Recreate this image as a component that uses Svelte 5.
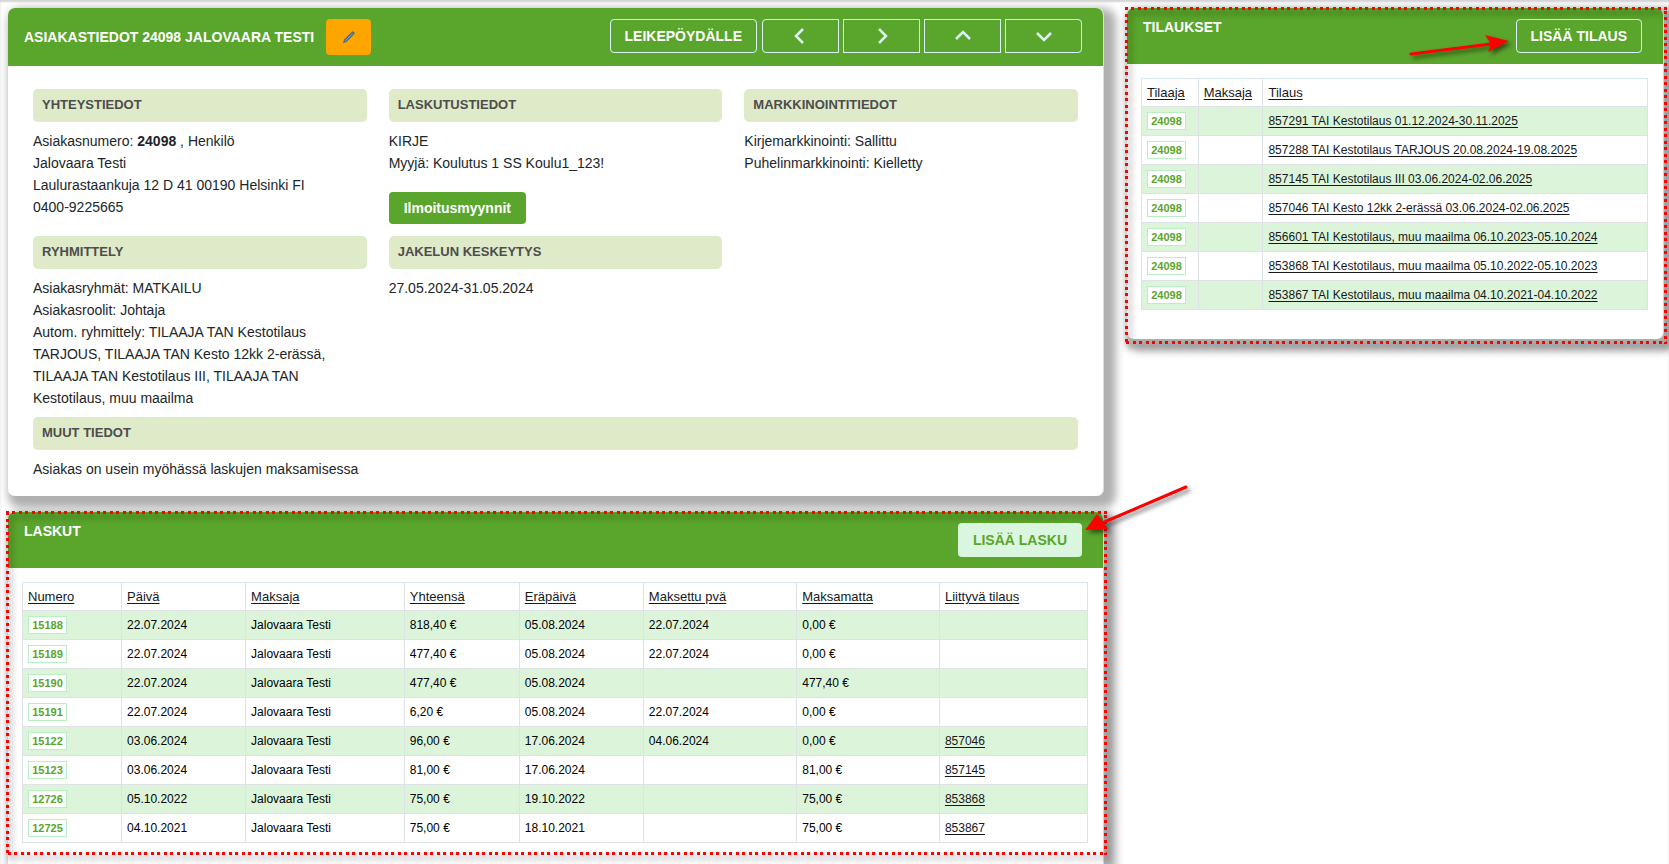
<script>
  const customerId = "24098";

  // w = column width, percent of the table
  const orderColumns = [
    { label: "Tilaaja", w: 11.2 },
    { label: "Maksaja", w: 12.8 },
    { label: "Tilaus", w: 76 }
  ];

  const orders = [
    "857291 TAI Kestotilaus 01.12.2024-30.11.2025",
    "857288 TAI Kestotilaus TARJOUS 20.08.2024-19.08.2025",
    "857145 TAI Kestotilaus III 03.06.2024-02.06.2025",
    "857046 TAI Kesto 12kk 2-erässä 03.06.2024-02.06.2025",
    "856601 TAI Kestotilaus, muu maailma 06.10.2023-05.10.2024",
    "853868 TAI Kestotilaus, muu maailma 05.10.2022-05.10.2023",
    "853867 TAI Kestotilaus, muu maailma 04.10.2021-04.10.2022"
  ];

  const invoiceColumns = [
    { label: "Numero", w: 9.3 },
    { label: "Päivä", w: 11.65 },
    { label: "Maksaja", w: 14.9 },
    { label: "Yhteensä", w: 10.8 },
    { label: "Eräpäivä", w: 11.65 },
    { label: "Maksettu pvä", w: 14.4 },
    { label: "Maksamatta", w: 13.4 },
    { label: "Liittyvä tilaus", w: 13.9 }
  ];

  const payer = "Jalovaara Testi";
  const invoices = [
    { id: "15188", date: "22.07.2024", total: "818,40", due: "05.08.2024", paid: "22.07.2024", open: "0,00", order: "" },
    { id: "15189", date: "22.07.2024", total: "477,40", due: "05.08.2024", paid: "22.07.2024", open: "0,00", order: "" },
    { id: "15190", date: "22.07.2024", total: "477,40", due: "05.08.2024", paid: "", open: "477,40", order: "" },
    { id: "15191", date: "22.07.2024", total: "6,20", due: "05.08.2024", paid: "22.07.2024", open: "0,00", order: "" },
    { id: "15122", date: "03.06.2024", total: "96,00", due: "17.06.2024", paid: "04.06.2024", open: "0,00", order: "857046" },
    { id: "15123", date: "03.06.2024", total: "81,00", due: "17.06.2024", paid: "", open: "81,00", order: "857145" },
    { id: "12726", date: "05.10.2022", total: "75,00", due: "19.10.2022", paid: "", open: "75,00", order: "853868" },
    { id: "12725", date: "04.10.2021", total: "75,00", due: "18.10.2021", paid: "", open: "75,00", order: "853867" }
  ];

  const arrows = [
    { label: "Edellinen", d: "M11 2 L4 9 L11 16" },
    { label: "Seuraava", d: "M6 2 L13 9 L6 16" },
    { label: "Ylös", d: "M2 12 L9 5 L16 12" },
    { label: "Alas", d: "M2 6 L9 13 L16 6" }
  ];
</script>

<div class="page">
  <main class="column">
    <section class="card">
      <header class="bar">
        <h2 class="middle">ASIAKASTIEDOT {customerId} JALOVAARA TESTI</h2>
        <button class="edit" aria-label="Muokkaa">
          <svg width="14" height="14" viewBox="0 0 14 14">
            <path d="M1 13 L2 9.500 L9.800 1.700 Q10.700 .8 11.600 1.700 L12.300 2.400 Q13.200 3.300 12.300 4.200 L4.500 12 Z" fill="#3f729b" />
            <path d="M3.200 10.800 L9.600 4.400" stroke="#c99c3c" stroke-width="1" />
            <path d="M9 2.500 L11.500 5" stroke="#d99a20" stroke-width=".7" />
          </svg>
        </button>
        <div class="actions">
          <button class="outline">LEIKEPÖYDÄLLE</button>
          <div class="nav">
            {#each arrows as arrow}
              <button class="outline" aria-label={arrow.label}>
                <svg width="18" height="18" viewBox="0 0 18 18">
                  <path d={arrow.d} fill="none" stroke="#dcf3f5" stroke-width="2.500" />
                </svg>
              </button>
            {/each}
          </div>
        </div>
      </header>

      <div class="info">
        <div>
          <h3>YHTEYSTIEDOT</h3>
          <p>Asiakasnumero: <b>{customerId}</b> , Henkilö</p>
          <p>Jalovaara Testi</p>
          <p>Laulurastaankuja 12 D 41 00190 Helsinki FI</p>
          <p>0400-9225665</p>
        </div>
        <div>
          <h3>LASKUTUSTIEDOT</h3>
          <p>KIRJE</p>
          <p>Myyjä: Koulutus 1 SS Koulu1_123!</p>
          <button class="solid">Ilmoitusmyynnit</button>
        </div>
        <div>
          <h3>MARKKINOINTITIEDOT</h3>
          <p>Kirjemarkkinointi: Sallittu</p>
          <p>Puhelinmarkkinointi: Kielletty</p>
        </div>
        <div>
          <h3>RYHMITTELY</h3>
          <p>Asiakasryhmät: MATKAILU</p>
          <p>Asiakasroolit: Johtaja</p>
          <p>
            Autom. ryhmittely: TILAAJA TAN Kestotilaus TARJOUS, TILAAJA TAN Kesto 12kk 2-erässä,
            TILAAJA TAN Kestotilaus III, TILAAJA TAN Kestotilaus, muu maailma
          </p>
        </div>
        <div>
          <h3>JAKELUN KESKEYTYS</h3>
          <p>27.05.2024-31.05.2024</p>
        </div>
        <div class="wide">
          <h3>MUUT TIEDOT</h3>
          <p>Asiakas on usein myöhässä laskujen maksamisessa</p>
        </div>
      </div>
    </section>

    <section class="card invoices">
      <div class="marked">
        <header class="bar">
          <h2>LASKUT</h2>
          <div class="actions">
            <button class="light">LISÄÄ LASKU</button>
            <svg class="pointer from-right" width="112" height="56" viewBox="0 0 112 56">
              <path d="M104 6 L20 42" stroke="red" stroke-width="3" stroke-linecap="round" />
              <path d="M3 49 L15 33 L21 41 L26 48 Z" fill="red" />
            </svg>
          </div>
        </header>
        <div class="table-wrap">
          <table>
            <thead>
              <tr>
                {#each invoiceColumns as col}
                  <th style="width: {col.w}%"><a href="#sort">{col.label}</a></th>
                {/each}
              </tr>
            </thead>
            <tbody>
              {#each invoices as row}
                <tr>
                  <td><a class="badge" href="#invoice">{row.id}</a></td>
                  <td>{row.date}</td>
                  <td>{payer}</td>
                  <td>{row.total} €</td>
                  <td>{row.due}</td>
                  <td>{row.paid}</td>
                  <td>{row.open} €</td>
                  <td>{#if row.order}<a href="#order">{row.order}</a>{/if}</td>
                </tr>
              {/each}
            </tbody>
          </table>
        </div>
        <svg class="frame"><rect width="100%" height="100%" /></svg>
      </div>
    </section>
  </main>

  <aside class="column">
    <section class="card">
      <div class="marked">
        <header class="bar">
          <h2>TILAUKSET</h2>
          <div class="actions">
            <button class="outline">LISÄÄ TILAUS</button>
            <svg class="pointer from-left" width="106" height="34" viewBox="0 0 106 34">
              <path d="M1 22 L81 12" stroke="red" stroke-width="3" stroke-linecap="round" />
              <path d="M99 9 L75 3 L81 12 L78 20 Z" fill="red" />
            </svg>
          </div>
        </header>
        <div class="table-wrap orders">
          <table>
            <thead>
              <tr>
                {#each orderColumns as col}
                  <th style="width: {col.w}%"><a href="#sort">{col.label}</a></th>
                {/each}
              </tr>
            </thead>
            <tbody>
              {#each orders as order}
                <tr>
                  <td><a class="badge" href="#customer">{customerId}</a></td>
                  <td></td>
                  <td><a href="#order">{order}</a></td>
                </tr>
              {/each}
            </tbody>
          </table>
        </div>
        <svg class="frame"><rect width="100%" height="100%" /></svg>
      </div>
    </section>
  </aside>
</div>

<style>
  :global(body) {
    overflow: hidden;
    background: #fff;
  }

  .page {
    display: grid;
    grid-template-columns: 1096fr 537fr;
    gap: 23px;
    align-items: start;
    box-sizing: border-box;
    min-height: 100vh;
    padding: 8px 5px 0 8px;
    box-shadow: inset 0 2px 2px #d4d4d4;
    font-family: "Liberation Sans", Arial, sans-serif;
    font-size: 14px;
    line-height: 22px;
    color: #212529;
  }

  .column {
    display: flex;
    flex-direction: column;
    gap: 16px;
    min-width: 0;
  }

  .card {
    position: relative;
    background: #fff;
    border-right: 1px solid #dcdcdc;
    border-radius: 7px;
    box-shadow: 6px 6px 8px 6px #b0b0b0;
  }

  .invoices {
    padding-bottom: 40px;
  }

  .bar {
    display: flex;
    align-items: flex-start;
    padding: 11px 21px 11px 16px;
    background: #5aa52b;
    border-radius: 7px 7px 0 0;
  }

  h2 {
    margin: 0;
    font-size: 14px;
    line-height: 16px;
    color: #fff;
  }

  h2.middle {
    align-self: center;
  }

  .actions {
    position: relative;
    display: flex;
    gap: 5px;
    margin-left: auto;
  }

  .nav {
    display: flex;
    gap: 4px;
  }

  button {
    display: flex;
    align-items: center;
    justify-content: center;
    box-sizing: border-box;
    height: 34px;
    padding: 0 14px;
    border: 1px solid transparent;
    border-radius: 4px;
    font-family: inherit;
    font-size: 14px;
    font-weight: bold;
    color: #fff;
    cursor: pointer;
  }

  .edit {
    width: 45px;
    height: 36px;
    margin-left: 12px;
    padding: 0;
    background: #ffa500;
  }

  .outline {
    background: none;
    border-color: #dcf3f5;
  }

  .nav button {
    width: 77px;
    border-radius: 0;
  }

  .nav button:first-child {
    border-radius: 4px 0 0 4px;
  }

  .nav button:last-child {
    border-radius: 0 4px 4px 0;
  }

  .light {
    background: #dbf6de;
    color: #5aa52b;
  }

  .solid {
    height: 32px;
    margin: 18px 0 4px;
    background: #5aa52b;
  }

  .info {
    display: grid;
    grid-template-columns: repeat(3, 1fr);
    gap: 8px 22px;
    padding: 23px 25px 16px;
  }

  .wide {
    grid-column: 1 / -1;
  }

  h3 {
    height: 33px;
    margin: 0 0 8px;
    padding: 0 9px;
    background: #dfeac8;
    border-radius: 5px;
    font-size: 13px;
    line-height: 31px;
    color: #4d4d4d;
  }

  p {
    margin: 0;
  }

  .table-wrap {
    padding: 14px 15px 7px 14px;
  }

  .orders {
    padding-bottom: 29px;
  }

  table {
    width: 100%;
    table-layout: fixed;
    border-collapse: collapse;
    font-size: 12px;
    line-height: 18px;
    color: #000;
  }

  th,
  td {
    box-sizing: border-box;
    height: 29px;
    padding: 0 5px;
    border: 1px solid #dee2e6;
    border-top-color: #d6e8f2;
    text-align: left;
    vertical-align: middle;
    white-space: nowrap;
  }

  th {
    height: 28px;
    font-size: 13px;
    font-weight: normal;
  }

  tbody tr:nth-child(odd) {
    background: #dcf5da;
  }

  a {
    color: #16181b;
    text-underline-offset: 2px;
  }

  .badge {
    display: block;
    box-sizing: border-box;
    width: 39px;
    height: 18px;
    background: #fff;
    border: 1px solid #b9efc2;
    font-size: 11px;
    font-weight: bold;
    line-height: 16px;
    text-align: center;
    text-decoration: none;
    color: #5aa52b;
  }

  /* red call-outs drawn over the cards */
  .marked {
    position: relative;
  }

  .frame {
    position: absolute;
    top: -1px;
    left: -2px;
    width: calc(100% + 6px);
    height: calc(100% + 6px);
    overflow: hidden;
    pointer-events: none;
    filter: drop-shadow(3px 4px 3px rgba(0, 0, 0, 0.6));
  }

  /* the outer half of the stroke is clipped, 3px stay visible */
  .frame rect {
    fill: none;
    stroke: red;
    stroke-width: 6;
    stroke-dasharray: 3 3 3 4;
  }

  .pointer {
    position: absolute;
    z-index: 2;
    overflow: visible;
    pointer-events: none;
    fill: none;
    filter: drop-shadow(3px 3px 2px rgba(0, 0, 0, 0.5));
  }

  .from-left {
    top: 13px;
    right: 100%;
  }

  .from-right {
    bottom: 20px;
    left: 100%;
  }
</style>
